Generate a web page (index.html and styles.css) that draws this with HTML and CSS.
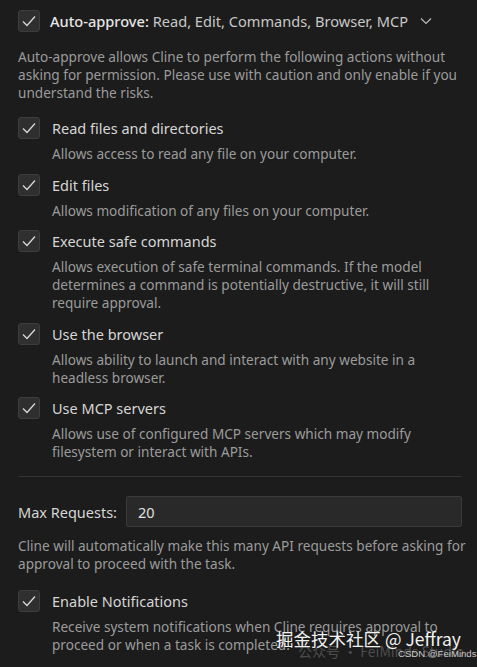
FILE: index.html
```html
<!DOCTYPE html>
<html>
<head>
<meta charset="utf-8">
<link rel="stylesheet" href="styles.css">
</head>
<body>
<div class="panel">
  <div class="header">
    <span class="cb"><svg viewBox="0 0 22 22" width="22" height="22"><path d="M5 11.5 L9 15.5 L17 6.5" fill="none" stroke="#d8d8d8" stroke-width="1.3"/></svg></span>
    <span class="header-text"><b>Auto-approve:</b> Read, Edit, Commands, Browser, MCP</span>
    <svg class="chev" viewBox="0 0 12 8" width="12" height="8"><path d="M1 1.5 L6 6.5 L11 1.5" fill="none" stroke="#bbb" stroke-width="1.2"/></svg>
  </div>
  <p class="intro">Auto-approve allows Cline to perform the following actions without asking for permission. Please use with caution and only enable if you understand the risks.</p>

  <div class="item">
    <div class="row"><span class="cb"><svg viewBox="0 0 22 22" width="22" height="22"><path d="M5 11.5 L9 15.5 L17 6.5" fill="none" stroke="#d8d8d8" stroke-width="1.3"/></svg></span><span class="label">Read files and directories</span></div>
    <p class="desc">Allows access to read any file on your computer.</p>
  </div>
  <div class="item">
    <div class="row"><span class="cb"><svg viewBox="0 0 22 22" width="22" height="22"><path d="M5 11.5 L9 15.5 L17 6.5" fill="none" stroke="#d8d8d8" stroke-width="1.3"/></svg></span><span class="label">Edit files</span></div>
    <p class="desc">Allows modification of any files on your computer.</p>
  </div>
  <div class="item">
    <div class="row"><span class="cb"><svg viewBox="0 0 22 22" width="22" height="22"><path d="M5 11.5 L9 15.5 L17 6.5" fill="none" stroke="#d8d8d8" stroke-width="1.3"/></svg></span><span class="label">Execute safe commands</span></div>
    <p class="desc">Allows execution of safe terminal commands. If the model determines a command is potentially destructive, it will still require approval.</p>
  </div>
  <div class="item">
    <div class="row"><span class="cb"><svg viewBox="0 0 22 22" width="22" height="22"><path d="M5 11.5 L9 15.5 L17 6.5" fill="none" stroke="#d8d8d8" stroke-width="1.3"/></svg></span><span class="label">Use the browser</span></div>
    <p class="desc">Allows ability to launch and interact with any website in a headless browser.</p>
  </div>
  <div class="item">
    <div class="row"><span class="cb"><svg viewBox="0 0 22 22" width="22" height="22"><path d="M5 11.5 L9 15.5 L17 6.5" fill="none" stroke="#d8d8d8" stroke-width="1.3"/></svg></span><span class="label">Use MCP servers</span></div>
    <p class="desc">Allows use of configured MCP servers which may modify filesystem or interact with APIs.</p>
  </div>

  <hr class="divider">

  <div class="max-row">
    <span class="max-label">Max Requests:</span>
    <div class="input">20</div>
  </div>
  <p class="intro max-desc">Cline will automatically make this many API requests before asking for approval to proceed with the task.</p>

  <div class="item notif">
    <div class="row"><span class="cb"><svg viewBox="0 0 22 22" width="22" height="22"><path d="M5 11.5 L9 15.5 L17 6.5" fill="none" stroke="#d8d8d8" stroke-width="1.3"/></svg></span><span class="label">Enable Notifications</span></div>
    <p class="desc">Receive system notifications when Cline requires approval to proceed or when a task is completed.</p>
  </div>
</div>
<div class="wm-main">掘金技术社区 @ Jeffray</div>
<div class="wm-faint">公众号 · FeiMinds Studio</div>
<div class="wm-csdn">CSDN @FeiMinds</div>
</body>
</html>
```
FILE: styles.css
```css
html, body {
  margin: 0;
  padding: 0;
  background: #1c1c1c;
  height: 667px;
  overflow: hidden;
}
body {
  position: relative;
  font-family: "Noto Sans", "Open Sans", sans-serif;
  color: #d4d4d4;
}
.panel {
  padding: 10px 15px 0 18px;
}
.header {
  display: flex;
  align-items: center;
  height: 22px;
}
.cb {
  width: 20px;
  height: 20px;
  flex: none;
  background: #2f2f30;
  border: 1px solid #3d3d3d;
  border-radius: 3px;
  display: flex;
  align-items: center;
  justify-content: center;
  overflow: hidden;
}
.cb svg { flex: none; }
.header-text {
  margin-left: 10px;
  font-size: 14.6px;
  color: #c8c8c8;
}
.header-text b {
  font-weight: 500;
  color: #e6e6e6;
}
.chev { margin-left: 12px; }
.intro {
  margin: 16px 0 0;
  font-size: 13.6px;
  line-height: 18px;
  color: #9b9b9b;
}
.item { margin-top: 15px; }
.item + .item { margin-top: 10.5px; }
.row {
  display: flex;
  align-items: center;
  height: 22px;
}
.label {
  margin-left: 12px;
  font-size: 14.5px;
  color: #d6d6d6;
}
.desc {
  margin: 6px 0 0 34px;
  font-size: 13.6px;
  line-height: 18px;
  color: #9b9b9b;
}
.divider {
  border: 0;
  border-top: 1px solid #333;
  margin: 15px 0 0;
}
.max-row {
  display: flex;
  align-items: center;
  margin-top: 19px;
}
.max-label {
  font-size: 14.5px;
  color: #d6d6d6;
  width: 108px;
}
.input {
  flex: 1;
  height: 29px;
  box-sizing: content-box;
  background: #292929;
  border: 1px solid #3a3a3a;
  border-radius: 2px;
  display: flex;
  align-items: center;
  padding-left: 11px;
  font-size: 14.5px;
  color: #e0e0e0;
}
.max-desc {
  margin-top: 10px;
  margin-right: -6px;
}
.item.notif { margin-top: 17px; }
.wm-main {
  position: absolute;
  left: 276px;
  top: 628px;
  font-size: 17.5px;
  line-height: 22px;
  white-space: nowrap;
  color: #f2f2f2;
  font-family: "Noto Sans CJK SC", "Noto Sans", sans-serif;
}
.wm-faint {
  position: absolute;
  left: 298px;
  top: 641px;
  font-size: 14px;
  white-space: nowrap;
  color: rgba(200,200,200,0.3);
  font-family: "Noto Sans CJK SC", "Noto Sans", sans-serif;
}
.wm-csdn {
  position: absolute;
  left: 398px;
  top: 648px;
  font-size: 9.6px;
  line-height: 12px;
  white-space: nowrap;
  color: #c8c8c8;
  font-family: "Liberation Sans", sans-serif;
}
```
